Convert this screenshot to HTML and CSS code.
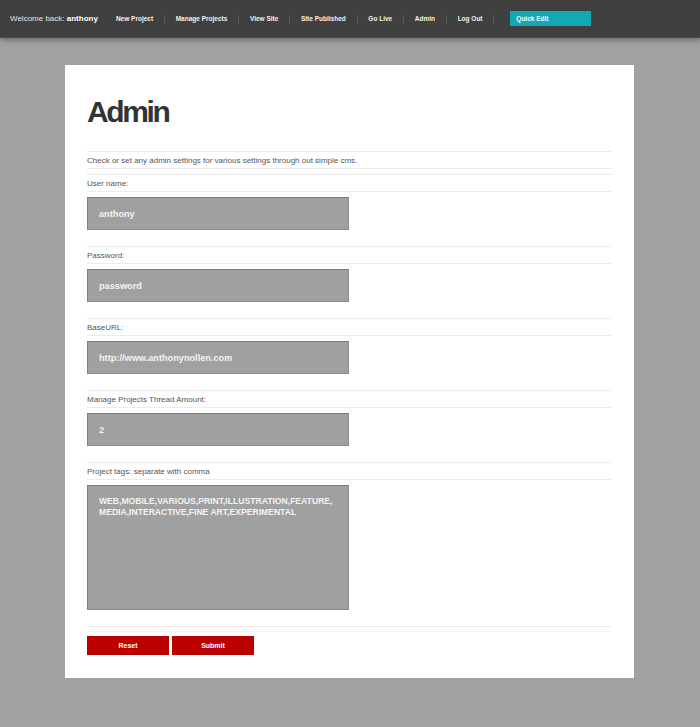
FILE: index.html
```html
<!DOCTYPE html>
<html lang="en">
<head>
<meta charset="utf-8">
<title>Admin</title>
<link rel="stylesheet" href="styles.css">
</head>
<body>
<header class="topbar">
  <div class="welcome">Welcome back: <strong>anthony</strong></div>
  <nav class="nav">
    <a href="#">New Project</a><span class="sep"></span>
    <a href="#">Manage Projects</a><span class="sep"></span>
    <a href="#">View Site</a><span class="sep"></span>
    <a href="#">Site Published</a><span class="sep"></span>
    <a href="#">Go Live</a><span class="sep"></span>
    <a href="#">Admin</a><span class="sep"></span>
    <a href="#">Log Out</a><span class="sep"></span>
  </nav>
  <a class="quick" href="#">Quick Edit</a>
</header>

<main class="card">
  <h1 class="title">Admin</h1>
  <form class="form">
    <p class="row desc">Check or set any admin settings for various settings through out simple cms.</p>

    <div class="field">
      <label class="row" for="user">User name:</label>
      <input class="input" id="user" type="text" value="anthony">
    </div>

    <div class="field">
      <label class="row" for="pass">Password:</label>
      <input class="input" id="pass" type="text" value="password">
    </div>

    <div class="field">
      <label class="row" for="base">BaseURL:</label>
      <input class="input" id="base" type="text" value="http://www.anthonynollen.com">
    </div>

    <div class="field">
      <label class="row" for="thread">Manage Projects Thread Amount:</label>
      <input class="input" id="thread" type="text" value="2">
    </div>

    <div class="field">
      <label class="row" for="tags">Project tags: separate with comma</label>
      <textarea class="area" id="tags">WEB,MOBILE,VARIOUS,PRINT,ILLUSTRATION,FEATURE,
MEDIA,INTERACTIVE,FINE ART,EXPERIMENTAL</textarea>
    </div>

    <div class="divider"></div>

    <div class="buttons">
      <button class="btn" type="reset">Reset</button>
      <button class="btn" type="submit">Submit</button>
    </div>
  </form>
</main>
</body>
</html>
```

FILE: styles.css
```css
* {
  box-sizing: border-box;
}

html, body {
  margin: 0;
  padding: 0;
}

body {
  background: #a1a1a1;
  font-family: "Liberation Sans", Arial, sans-serif;
  color: #555;
}

.topbar {
  height: 38px;
  background: #404040;
  border-bottom: 1px solid #4d4d4d;
  box-shadow: 0 2px 5px rgba(0, 0, 0, 0.35);
  display: flex;
  align-items: center;
  padding-left: 10px;
}

.welcome {
  font-size: 8px;
  color: #e2e2e2;
}

.welcome strong {
  color: #fff;
}

.nav {
  display: flex;
  align-items: center;
  gap: 10.8px;
  margin-left: 18px;
}

.nav a {
  color: #f2f2f2;
  font-size: 6.5px;
  font-weight: bold;
  text-decoration: none;
  white-space: nowrap;
}

.sep {
  width: 1px;
  height: 8px;
  background: #5c5c5c;
}

.quick {
  margin-left: 16px;
  width: 81px;
  height: 15px;
  background: #12a8b6;
  color: #eaffff;
  font-size: 6.5px;
  font-weight: bold;
  text-decoration: none;
  padding-left: 6px;
  display: flex;
  align-items: center;
  margin-top: -1px;
}

.card {
  width: 569px;
  margin: 27px 0 0 65px;
  background: #fff;
  padding: 29px 22px 23px 22px;
}

.title {
  margin: 0 0 21px 0;
  font-size: 30px;
  line-height: 36px;
  font-weight: bold;
  letter-spacing: -2.4px;
  color: #333;
}

.form {
  margin: 0;
}

.row {
  display: block;
  margin: 0;
  border-top: 1px solid #ececec;
  border-bottom: 1px solid #ececec;
  height: 18px;
  line-height: 17px;
  font-size: 8px;
  color: #555;
}

.desc {
  margin-bottom: 5px;
}

.field {
  display: flex;
  flex-direction: column;
  gap: 5px;
  margin-bottom: 16px;
}

.input,
.area {
  display: block;
  width: 262px;
  margin: 0;
  background: #a0a0a0;
  border: 1px solid #8a8a8a;
  border-top-color: #7a7a7a;
  border-left-color: #808080;
  color: #f3f3f3;
  font-family: "Liberation Sans", Arial, sans-serif;
  font-weight: bold;
  outline: none;
  border-radius: 0;
}

.input {
  height: 33px;
  font-size: 9.2px;
  padding: 0 11px;
}

.area {
  height: 125px;
  font-size: 8.6px;
  line-height: 11px;
  padding: 10px 11px;
  resize: none;
  overflow: hidden;
}

.divider {
  height: 6px;
  border-top: 1px solid #ececec;
  border-bottom: 1px solid #f4f4f4;
}

.buttons {
  display: flex;
  gap: 3px;
  margin-top: 4px;
}

.btn {
  width: 82px;
  height: 19px;
  margin: 0;
  padding: 0;
  background: #bd0000;
  border: 1px solid #b00000;
  color: #fff;
  font-family: "Liberation Sans", Arial, sans-serif;
  font-size: 7px;
  font-weight: bold;
  border-radius: 0;
}
```
